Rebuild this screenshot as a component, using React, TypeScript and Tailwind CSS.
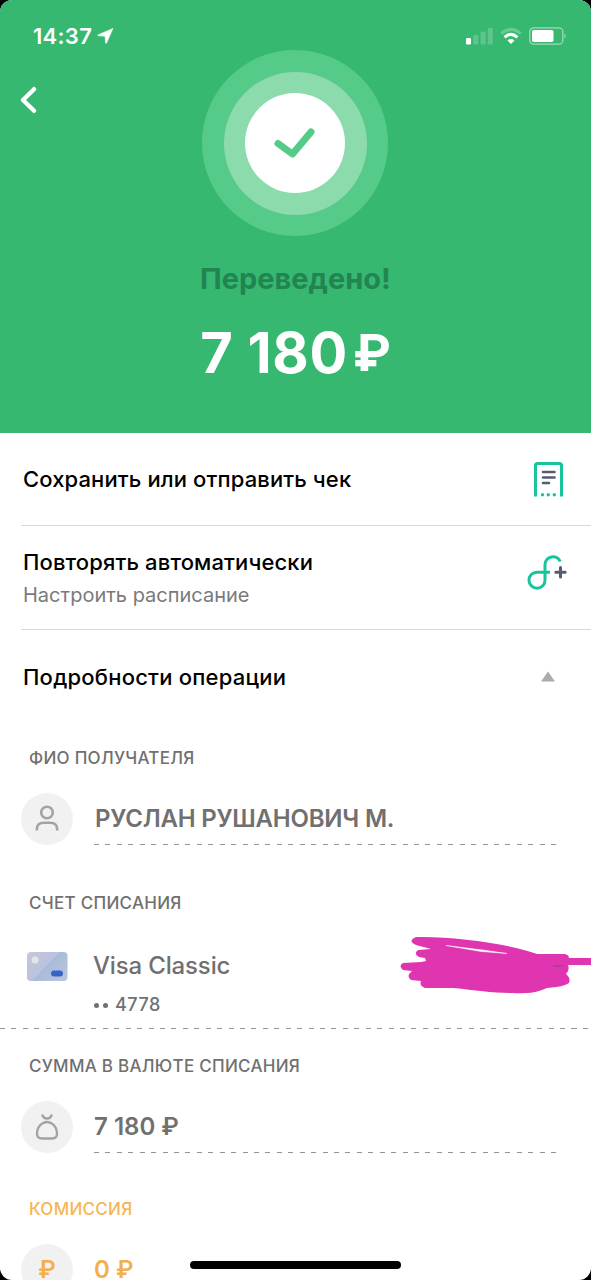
import type { ReactNode } from "react";

const DASHES =
  "h-px bg-[repeating-linear-gradient(90deg,#959595_0_5px,transparent_5px_11.43px)]";

function StatusBar() {
  return (
    <div className="flex h-[72px] items-center justify-between pl-[33px] pr-[24px]">
      <div className="flex items-center gap-[5px]">
        <span className="text-[22px] font-semibold leading-[26px] tracking-[0.3px]">14:37</span>
        <svg width="17" height="16" viewBox="0 0 16 16" fill="currentColor">
          <path d="M15.4 0.5 L0.4 6.9 Q0 7.5 0.8 7.8 L7.6 8.2 L8.1 15 Q8.6 15.8 9.1 15 Z" stroke="currentColor" strokeWidth="0.6" />
        </svg>
      </div>
      <div className="flex items-center">
        <svg width="27" height="18" viewBox="0 0 27 18" fill="currentColor">
          <rect x="0" y="11" width="5" height="6.5" rx="1.2" />
          <rect x="7.3" y="8" width="5" height="9.5" rx="1.2" opacity="0.2" />
          <rect x="14.6" y="4.5" width="5" height="13" rx="1.2" opacity="0.2" />
          <rect x="21.8" y="1" width="5" height="16.5" rx="1.2" opacity="0.2" />
        </svg>
        <svg className="ml-[7px]" width="22" height="18" viewBox="0 0 22 18" fill="none" stroke="currentColor">
          <path d="M1.3 6.7 Q11 -2 20.7 6.7" strokeWidth="3" opacity="0.25" />
          <path d="M4.6 10.3 Q11 4.3 17.4 10.3" strokeWidth="3" />
          <path d="M7.5 13.4 Q11 10.6 14.5 13.4 L11 17 Z" fill="currentColor" stroke="none" />
        </svg>
        <svg className="ml-[7px]" width="38" height="18" viewBox="0 0 38 18" fill="none">
          <rect x="0.8" y="0.8" width="33" height="16.4" rx="4" stroke="#fff" strokeWidth="1.3" opacity="0.5" />
          <rect x="3" y="3" width="21.5" height="12" rx="1.8" fill="#fff" />
          <path d="M35.5 6.5 Q38 9 35.5 11.5 Z" fill="#fff" opacity="0.55" />
        </svg>
      </div>
    </div>
  );
}

function Header() {
  return (
    <header className="relative h-[433px] bg-[#36b870] text-white">
      <StatusBar />
      <svg className="absolute left-[19px] top-[86px]" width="18" height="28" viewBox="0 0 18 28" fill="none">
        <path d="M15 3.2 L4 14 L15 24.8" stroke="#fff" strokeWidth="4.4" strokeLinecap="round" strokeLinejoin="round" />
      </svg>
      <div className="mr-px">
        <div className="mx-auto -mt-[22px] flex size-[186px] items-center justify-center rounded-full bg-[#56ca88]">
          <div className="flex size-[143px] items-center justify-center rounded-full bg-[#8bdbad]">
            <div className="flex size-[100px] items-center justify-center rounded-full bg-white">
              <svg width="44" height="34" viewBox="0 0 44 34" fill="none">
                <path d="M5 17.5 L19.5 28 L38 6" stroke="#56ca88" strokeWidth="7" strokeLinecap="round" strokeLinejoin="round" />
              </svg>
            </div>
          </div>
        </div>
      </div>
      <h1 className="mt-[25px] text-center text-[29px] font-bold leading-[36px] text-[#228450]">Переведено!</h1>
      <p className="mt-[23px] flex items-center justify-center text-[56px] font-bold leading-[66px]">
        <span className="whitespace-pre tracking-[0.7px]">7 180</span>
        <span className="ml-[5px] text-[51px]">₽</span>
      </p>
    </header>
  );
}

function ReceiptIcon() {
  return (
    <svg width="32" height="36" viewBox="0 0 32 36" fill="none">
      <path d="M3.5 35.5 V4.5 Q3.5 2.5 5.5 2.5 H27.5 Q29.5 2.5 29.5 4.500 V35.500" stroke="#18c49a" strokeWidth="3" />
      <path d="M11 11 H22.500 M11 16.500 H22.500 M11 22 H17" stroke="#565b6f" strokeWidth="2.600" strokeLinecap="round" />
      <g fill="#18c49a">
        <circle cx="10.500" cy="33.800" r="1.700" />
        <circle cx="16.300" cy="33.800" r="1.700" />
        <circle cx="22.300" cy="33.800" r="1.700" />
      </g>
    </svg>
  );
}

function AutoRepeatIcon() {
  return (
    <svg width="40" height="36" viewBox="0 0 40 36" fill="none" strokeWidth="3">
      <path
        d="M23 18.200 H10 A8 8 0 1 0 18 26 V10.500 A8 8 0 0 1 33.300 7.500"
        stroke="#18c49a"
      />
      <path d="M33.500 13.500 V23 M28.800 18.200 H38.200" stroke="#565b6f" strokeLinecap="round" />
    </svg>
  );
}

function Avatar({ children }: { children: ReactNode }) {
  return (
    <div className="flex size-[52px] shrink-0 items-center justify-center rounded-full bg-[#f1f1f1]">
      {children}
    </div>
  );
}

function Scribble() {
  return (
    <svg className="absolute left-[397px] top-[-4px]" width="194" height="64" viewBox="0 0 194 64" fill="#e035b0">
      <path d="M19 5 C56 4 113 12 140 22 L168 22 Q172 23 172 26 L194 26 V33 L171 33 Q173 38 169 42 Q174 46 172 51 Q167 55 150 56 Q139 61 129 61 C105 62 83 59 57 56 L28 56 Q22 54 24 49 L14 48 Q9 44 14 40 L15 39 L6 38 Q1 34 6 31 L24 30 L29 29 L28 26 L22 25 Q16 22 21 18 L34 17 L19 13 Q10 9 19 5 Z" />
      <path d="M49 13.500 L86 18 L110 21.500 L84 19.500 Z" fill="#fff" stroke="#fff" strokeWidth="0.500" />
      <path d="M153 33.500 L160 33 L169 33.500 L160 35 Z" fill="#9c4a83" />
    </svg>
  );
}

function Label({ children, className = "text-[#707070]" }: { children: ReactNode; className?: string }) {
  return (
    <div className={`pl-[29px] text-[17px] font-medium leading-[22px] tracking-[0.28px] ${className}`}>{children}</div>
  );
}

export default function App() {
  return (
    <div className="h-[1280px] w-[591px] overflow-hidden bg-black font-['Inter','Noto_Sans',sans-serif]">
      <div className="relative h-full overflow-hidden rounded-[12px] bg-white">
        <Header />

        <div className="ml-[21px] flex h-[93px] items-center justify-between border-b border-[#d9d9d9] pl-[2px] pr-[27px]">
          <span className="text-[22px] font-medium leading-[28px] tracking-[0.12px] text-black">
            Сохранить или отправить чек
          </span>
          <ReceiptIcon />
        </div>

        <div className="ml-[21px] flex h-[104px] justify-between border-b border-[#d9d9d9] pl-[2px] pr-[24px] pt-[22px]">
          <div>
            <div className="text-[22px] font-medium leading-[28px] tracking-[0.13px] text-black">
              Повторять автоматически
            </div>
            <div className="mt-[7px] text-[20px] leading-[24px] text-[#7a7a7a]">Настроить расписание</div>
          </div>
          <div className="pt-[6px]">
            <AutoRepeatIcon />
          </div>
        </div>

        <div className="flex h-[94px] items-center justify-between pb-px pl-[23px] pr-[36px]">
          <span className="text-[22px] font-medium leading-[28px] tracking-[0.23px] text-black">
            Подробности операции
          </span>
          <svg width="14" height="11" viewBox="0 0 14 11" fill="#acacac">
            <path d="M7 0.500 L14 10.500 H0 Z" />
          </svg>
        </div>

        <section className="pt-[23px]">
          <Label>ФИО ПОЛУЧАТЕЛЯ</Label>
          <div className="mt-[24px] flex pl-[21px] pr-[35px]">
            <Avatar>
              <svg width="24" height="28" viewBox="0 0 24 28" fill="none" stroke="#a3a3a3" strokeWidth="2.600">
                <circle cx="12" cy="7.500" r="5.800" />
                <path d="M1.800 25.500 V24.500 Q1.800 17.800 9 17.800 H15 Q22.200 17.800 22.200 24.500 V25.500" />
              </svg>
            </Avatar>
            <div className="ml-[21px] flex h-[52px] flex-1 flex-col justify-end">
              <span className="mb-[10px] pl-px text-[24px] font-semibold leading-[30px] tracking-[-0.22px] text-[#707070]">
                РУСЛАН РУШАНОВИЧ М.
              </span>
              <div className={DASHES} />
            </div>
          </div>
        </section>

        <section className="pt-[47px]">
          <Label>СЧЕТ СПИСАНИЯ</Label>
          <div className="relative mt-[22px] flex h-[92px] pl-[27px]">
            <svg className="mt-[16px]" width="41" height="29" viewBox="0 0 41 29">
              <defs>
                <linearGradient id="card" x1="0" y1="0" x2="1" y2="0.700">
                  <stop offset="0" stopColor="#c8c7d5" />
                  <stop offset="0.550" stopColor="#b9c2df" />
                  <stop offset="0.560" stopColor="#a9bad9" />
                  <stop offset="1" stopColor="#b7c3da" />
                </linearGradient>
              </defs>
              <rect width="40.500" height="29" rx="4" fill="url(#card)" />
              <circle cx="8" cy="8" r="3.500" fill="#e4e4ed" />
              <rect x="24" y="18.500" width="12" height="6" rx="3" fill="#3564c8" />
            </svg>
            <div className="ml-[25px] text-[#707070]">
              <div className="mt-[15px] text-[24px] font-medium leading-[30px] tracking-[-0.15px]">Visa Classic</div>
              <div className="mt-[12px] flex items-center text-[18px] font-medium leading-[24px] tracking-[0.5px]">
                <span className="mr-[7px] flex gap-[4px] pl-px">
                  <i className="size-[5px] rounded-full bg-[#707070]" />
                  <i className="size-[5px] rounded-full bg-[#707070]" />
                </span>
                4778
              </div>
            </div>
            <Scribble />
          </div>
          <div className={DASHES} />
        </section>

        <section className="pt-[26px]">
          <Label>СУММА В ВАЛЮТЕ СПИСАНИЯ</Label>
          <div className="mt-[24px] flex pl-[21px] pr-[35px]">
            <Avatar>
              <svg width="24" height="28" viewBox="0 0 24 28" fill="none" stroke="#a3a3a3" strokeWidth="2.400">
                <path d="M7.300 1.500 Q8 5.500 12 5.500 Q16 5.500 16.700 1.500" />
                <path d="M8.500 9.800 Q12 8.200 15.500 9.800 C19.800 12 22 16.800 22 21 Q22 25.500 17 25.500 H7 Q2 25.500 2 21 C2 16.800 4.200 12 8.500 9.800 Z" />
              </svg>
            </Avatar>
            <div className="ml-[21px] flex h-[52px] flex-1 flex-col justify-end">
              <span className="mb-[10px] text-[24px] font-semibold leading-[30px] text-[#707070]">7 180 ₽</span>
              <div className={DASHES} />
            </div>
          </div>
        </section>

        <section className="pt-[45px]">
          <Label className="text-[#f6b556]">КОМИССИЯ</Label>
          <div className="mt-[24px] flex pl-[21px] text-[24px] font-semibold leading-[52px] text-[#f2b04c]">
            <Avatar>₽</Avatar>
            <span className="ml-[21px]">0 ₽</span>
          </div>
        </section>

        {/* Home indicator */}
        <div className="absolute left-[190px] top-[1261px] h-[8px] w-[211px] rounded-full bg-black" />
      </div>
    </div>
  );
}
